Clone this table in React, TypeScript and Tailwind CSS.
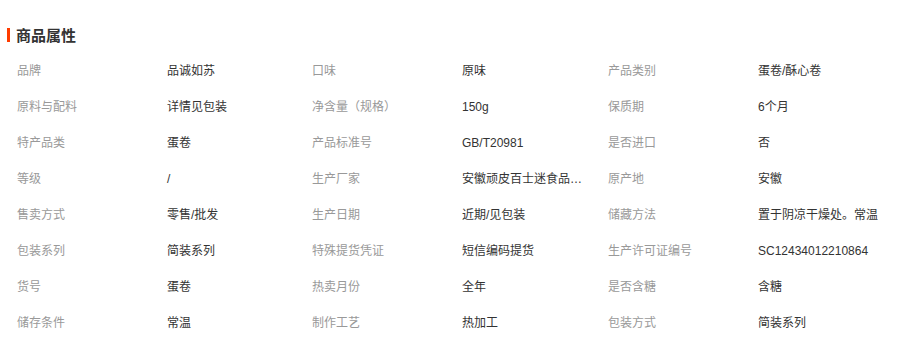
import React from 'react';

const rows: [string, string, string, string, string, string][] = [
  ['品牌', '品诚如苏', '口味', '原味', '产品类别', '蛋卷/酥心卷'],
  ['原料与配料', '详情见包装', '净含量（规格）', '150g', '保质期', '6个月'],
  ['特产品类', '蛋卷', '产品标准号', 'GB/T20981', '是否进口', '否'],
  ['等级', '/', '生产厂家', '安徽顽皮百士迷食品…', '原产地', '安徽'],
  ['售卖方式', '零售/批发', '生产日期', '近期/见包装', '储藏方法', '置于阴凉干燥处。常温'],
  ['包装系列', '简装系列', '特殊提货凭证', '短信编码提货', '生产许可证编号', 'SC12434012210864'],
  ['货号', '蛋卷', '热卖月份', '全年', '是否含糖', '含糖'],
  ['储存条件', '常温', '制作工艺', '热加工', '包装方式', '简装系列'],
];

function Cell({ text, label }: { text: string; label?: boolean }) {
  return (
    <div className={`h-[36px] flex items-center min-w-0 ${label ? 'text-[#999]' : 'text-[#333]'}`}>
      <span className="whitespace-nowrap">{text}</span>
    </div>
  );
}

export default function App() {
  return (
    <div
      className="w-[915px] h-[342px] bg-white overflow-hidden pt-[25px]"
      style={{ fontFamily: '"Liberation Sans", "Noto Sans CJK SC", sans-serif' }}
    >
      <div className="flex items-center h-[20px] pl-[7px]">
        <div className="w-[3px] h-[14px] bg-[#ff3c00]" />
        <h2 className="ml-[6px] text-[15px] font-bold text-[#333] leading-none">商品属性</h2>
      </div>
      <div className="mt-[8px] pl-[17px] grid grid-cols-[150px_145px_150px_146px_150px_1fr] text-[12px]">
        {rows.map((r, i) => (
          <React.Fragment key={i}>
            <Cell text={r[0]} label />
            <Cell text={r[1]} />
            <Cell text={r[2]} label />
            <Cell text={r[3]} />
            <Cell text={r[4]} label />
            <Cell text={r[5]} />
          </React.Fragment>
        ))}
      </div>
    </div>
  );
}
